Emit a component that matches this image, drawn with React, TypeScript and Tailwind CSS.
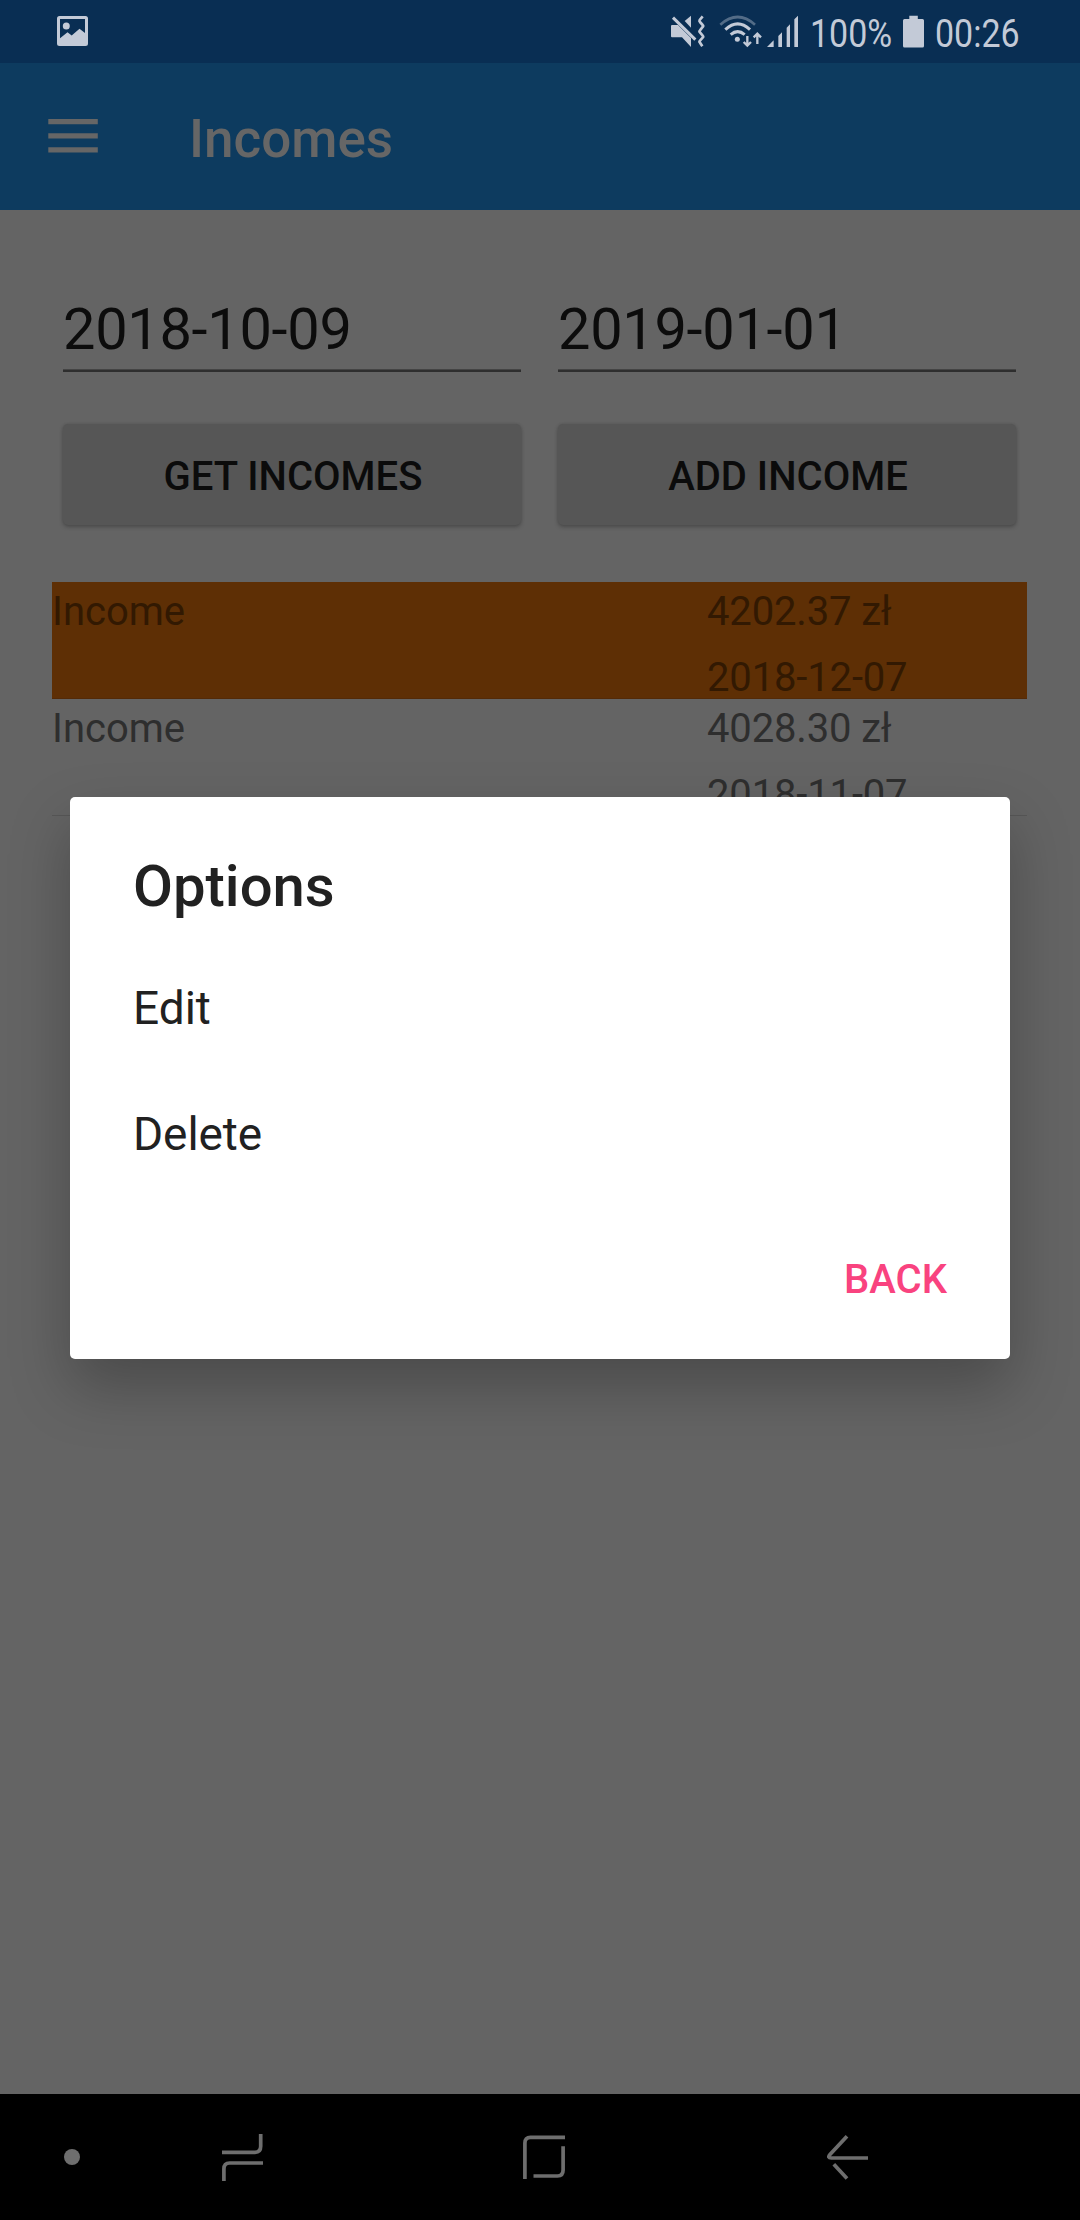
const incomes = [
  { name: "Income", amount: "4202.37 zł", date: "2018-12-07", selected: true },
  { name: "Income", amount: "4028.30 zł", date: "2018-11-07", selected: false },
];

function StatusBar() {
  return (
    <header className="flex h-[63px] items-start bg-[#092e53] text-[#c3cad7]">
      <svg className="mt-4 ml-[57px] h-[30px] w-[31px]" viewBox="0 0 31 30" fill="currentColor">
        <path
          fillRule="evenodd"
          d="M2.5 0h26A2.5 2.5 0 0 1 31 2.5v25a2.5 2.5 0 0 1-2.500 2.500h-26A2.500 2.500 0 0 1 0 27.500v-25A2.500 2.500 0 0 1 2.500 0ZM3 3v19.300l7.500-6 4.200 3.200 7.800-6.800 5.500 4.300V3Z"
        />
        <circle cx="9.300" cy="10" r="3.500" />
      </svg>
      <svg className="mt-[15px] ml-[583px] h-[33px] w-[35px]" viewBox="63 45 105 99" fill="currentColor">
        <path d="M66 75h18l39 39v27l-27-29H66q-3 0-3-3V78q0-3 3-3Z" />
        <path d="M104 63l19-16v36Z" />
        <path d="M69 53l67 66" fill="none" stroke="currentColor" strokeWidth="9" />
        <path d="M158 49l-9 11q-2 3 1 6l8 9q3 3 0 6l-8 10q-3 3 0 6l8 10q3 3 0 6l-8 9q-3 3 0 6l7 11" fill="none" stroke="currentColor" strokeWidth="8" />
      </svg>
      <svg className="mt-[15px] ml-[13px] h-[33px] w-[43px]" viewBox="205 45 129 99" fill="none" stroke="currentColor">
        <path d="M209 74q52-46 104 0" strokeWidth="8" opacity=".4" />
        <path d="M224 89q37-35 74 0" strokeWidth="9" />
        <path d="M240 104q21-18 42 0" strokeWidth="9" />
        <circle cx="260" cy="118" r="7.500" fill="currentColor" stroke="none" />
        <path d="M290 108v28M279 126l11 11 11-11M320 132v-29M309 112l11-11 11 11" strokeWidth="7" />
      </svg>
      <svg className="mt-[15px] ml-[5px] h-8 w-[31px]" viewBox="350 45 93 96" fill="currentColor">
        <path d="M350 141l20-20v20ZM384 108l11-11v44h-11ZM409 83l10-10v68h-10ZM432 58l11-11v94h-11Z" />
      </svg>
      <span className="mt-[11px] ml-[12px] w-[82px] origin-left scale-x-[0.862] text-[39.4px] leading-[46px] whitespace-nowrap">100%</span>
      <svg className="mt-[15px] ml-[11px] h-[33px] w-[21px] shrink-0" viewBox="0 0 21 33" fill="currentColor">
        <path d="M6.300.8h8.500v3.200H19.500a1.500 1.500 0 0 1 1.500 1.500V31a1.500 1.500 0 0 1-1.500 1.500h-18A1.500 1.500 0 0 1 0 31V5.500A1.500 1.500 0 0 1 1.500 4h4.800Z" />
      </svg>
      <span className="mt-[11px] ml-[11px] origin-left scale-x-[0.862] text-[39.4px] leading-[46px] whitespace-nowrap">00:26</span>
    </header>
  );
}

function AppBar() {
  return (
    <div className="flex h-[147px] items-center bg-[#0d3b5f] text-[#666666]">
      <svg className="mb-px ml-12 h-[34px] w-[50px]" viewBox="0 0 50 34" fill="currentColor">
        <path d="M.3 0h49.500v5.300H.3ZM.3 14.200h49.500v5.300H.3ZM.3 28.300h49.500v5.300H.3Z" />
      </svg>
      <h1 className="ml-[91px] pt-[5px] text-[53px] leading-[62px] font-medium">Incomes</h1>
    </div>
  );
}

function DateField({ value }: { value: string }) {
  return (
    <div className="flex-1">
      <div className="h-[74px] text-[57.75px] leading-[68px] tracking-[-0.3px] text-[#0c0c0c]">{value}</div>
      <div className="h-[3px] border-t border-[#444444] bg-[#2e2e2e]" />
    </div>
  );
}

function ActionButton({ label }: { label: string }) {
  return (
    <button className="h-[101px] flex-1 rounded-[5px] bg-[#565656] pt-[5px] pl-0.5 text-[40px] font-medium text-[#0b0b0b] shadow-[0_2px_4px_rgba(0,0,0,0.24),0_0_3px_rgba(0,0,0,0.1)]">
      {label}
    </button>
  );
}

function IncomeList() {
  return (
    <ul className="mx-[52px] mt-[57px] w-[975px] text-[40px] leading-[47px] tracking-[-0.15px]">
      {incomes.map((it) => (
        <li
          key={it.date}
          className={
            it.selected
              ? "flex h-[117px] border-b border-[#532a08] bg-[#5e2f05] pt-[6px] text-[#321902]"
              : "flex h-[117px] border-b border-[#575757] pt-[6px] text-[#2e2e2e]"
          }
        >
          <span className="w-[655px] tracking-normal">{it.name}</span>
          <div className="flex flex-col gap-[19px]">
            <span>{it.amount}</span>
            <span>{it.date}</span>
          </div>
        </li>
      ))}
    </ul>
  );
}

function OptionsDialog() {
  return (
    <div
      role="dialog"
      className="absolute top-[797px] left-[70px] flex h-[562px] w-[940px] flex-col rounded-[5px] bg-white px-[63px] text-[#212121] shadow-[0_28px_60px_rgba(0,0,0,0.26)]"
    >
      <h2 className="mt-[55px] text-[58px] leading-[68px] font-medium">Options</h2>
      <div className="mt-[25px] flex h-[126px] items-center text-[46px]">Edit</div>
      <div className="flex h-[126px] items-center text-[46px] tracking-[-0.1px]">Delete</div>
      <button className="mt-[59px] self-end text-[40px] leading-[48px] font-medium text-[#f9437f]">BACK</button>
    </div>
  );
}

function NavBar() {
  return (
    <nav className="flex h-[126px] items-center bg-black text-[#6e6e6e]">
      <i className="ml-16 size-4 rounded-full bg-current" />
      <svg className="ml-[142px] h-[47px] w-[41px]" viewBox="0 0 41 47" fill="none" stroke="currentColor" strokeWidth="3.700">
        <path d="M0 18.300h33q5.700 0 5.700-6V0M1.900 47V35q0-6 5.700-6H41" />
      </svg>
      <svg className="ml-[260px] h-11 w-[42px]" viewBox="0 0 42 44" fill="none" stroke="currentColor" strokeWidth="3.700">
        <path d="M1.900 44V8q0-5.600 5.500-5.600H42M40.100 11.300V35q0 6-5.600 6H10.500" />
      </svg>
      <svg className="ml-[262px] h-[46px] w-[41px]" viewBox="0 0 41 46" fill="none" stroke="currentColor" strokeWidth="3.700">
        <path d="M20 2.300L3 20.500C1 22.800 1.500 24 4.300 24H41M6.800 30.300L20 44.500" />
      </svg>
    </nav>
  );
}

export default function App() {
  return (
    <div className="relative flex h-[2220px] w-[1080px] flex-col overflow-hidden bg-[#646464] font-[Roboto,sans-serif]">
      <StatusBar />
      <AppBar />
      <main className="flex-1 pt-[85px]">
        <div className="mx-[63px] flex w-[953px] gap-[37px]">
          <DateField value="2018-10-09" />
          <DateField value="2019-01-01" />
        </div>
        <div className="mx-[63px] mt-[52px] flex w-[953px] gap-[37px]">
          <ActionButton label="GET INCOMES" />
          <ActionButton label="ADD INCOME" />
        </div>
        <IncomeList />
      </main>
      <OptionsDialog />
      <NavBar />
    </div>
  );
}
